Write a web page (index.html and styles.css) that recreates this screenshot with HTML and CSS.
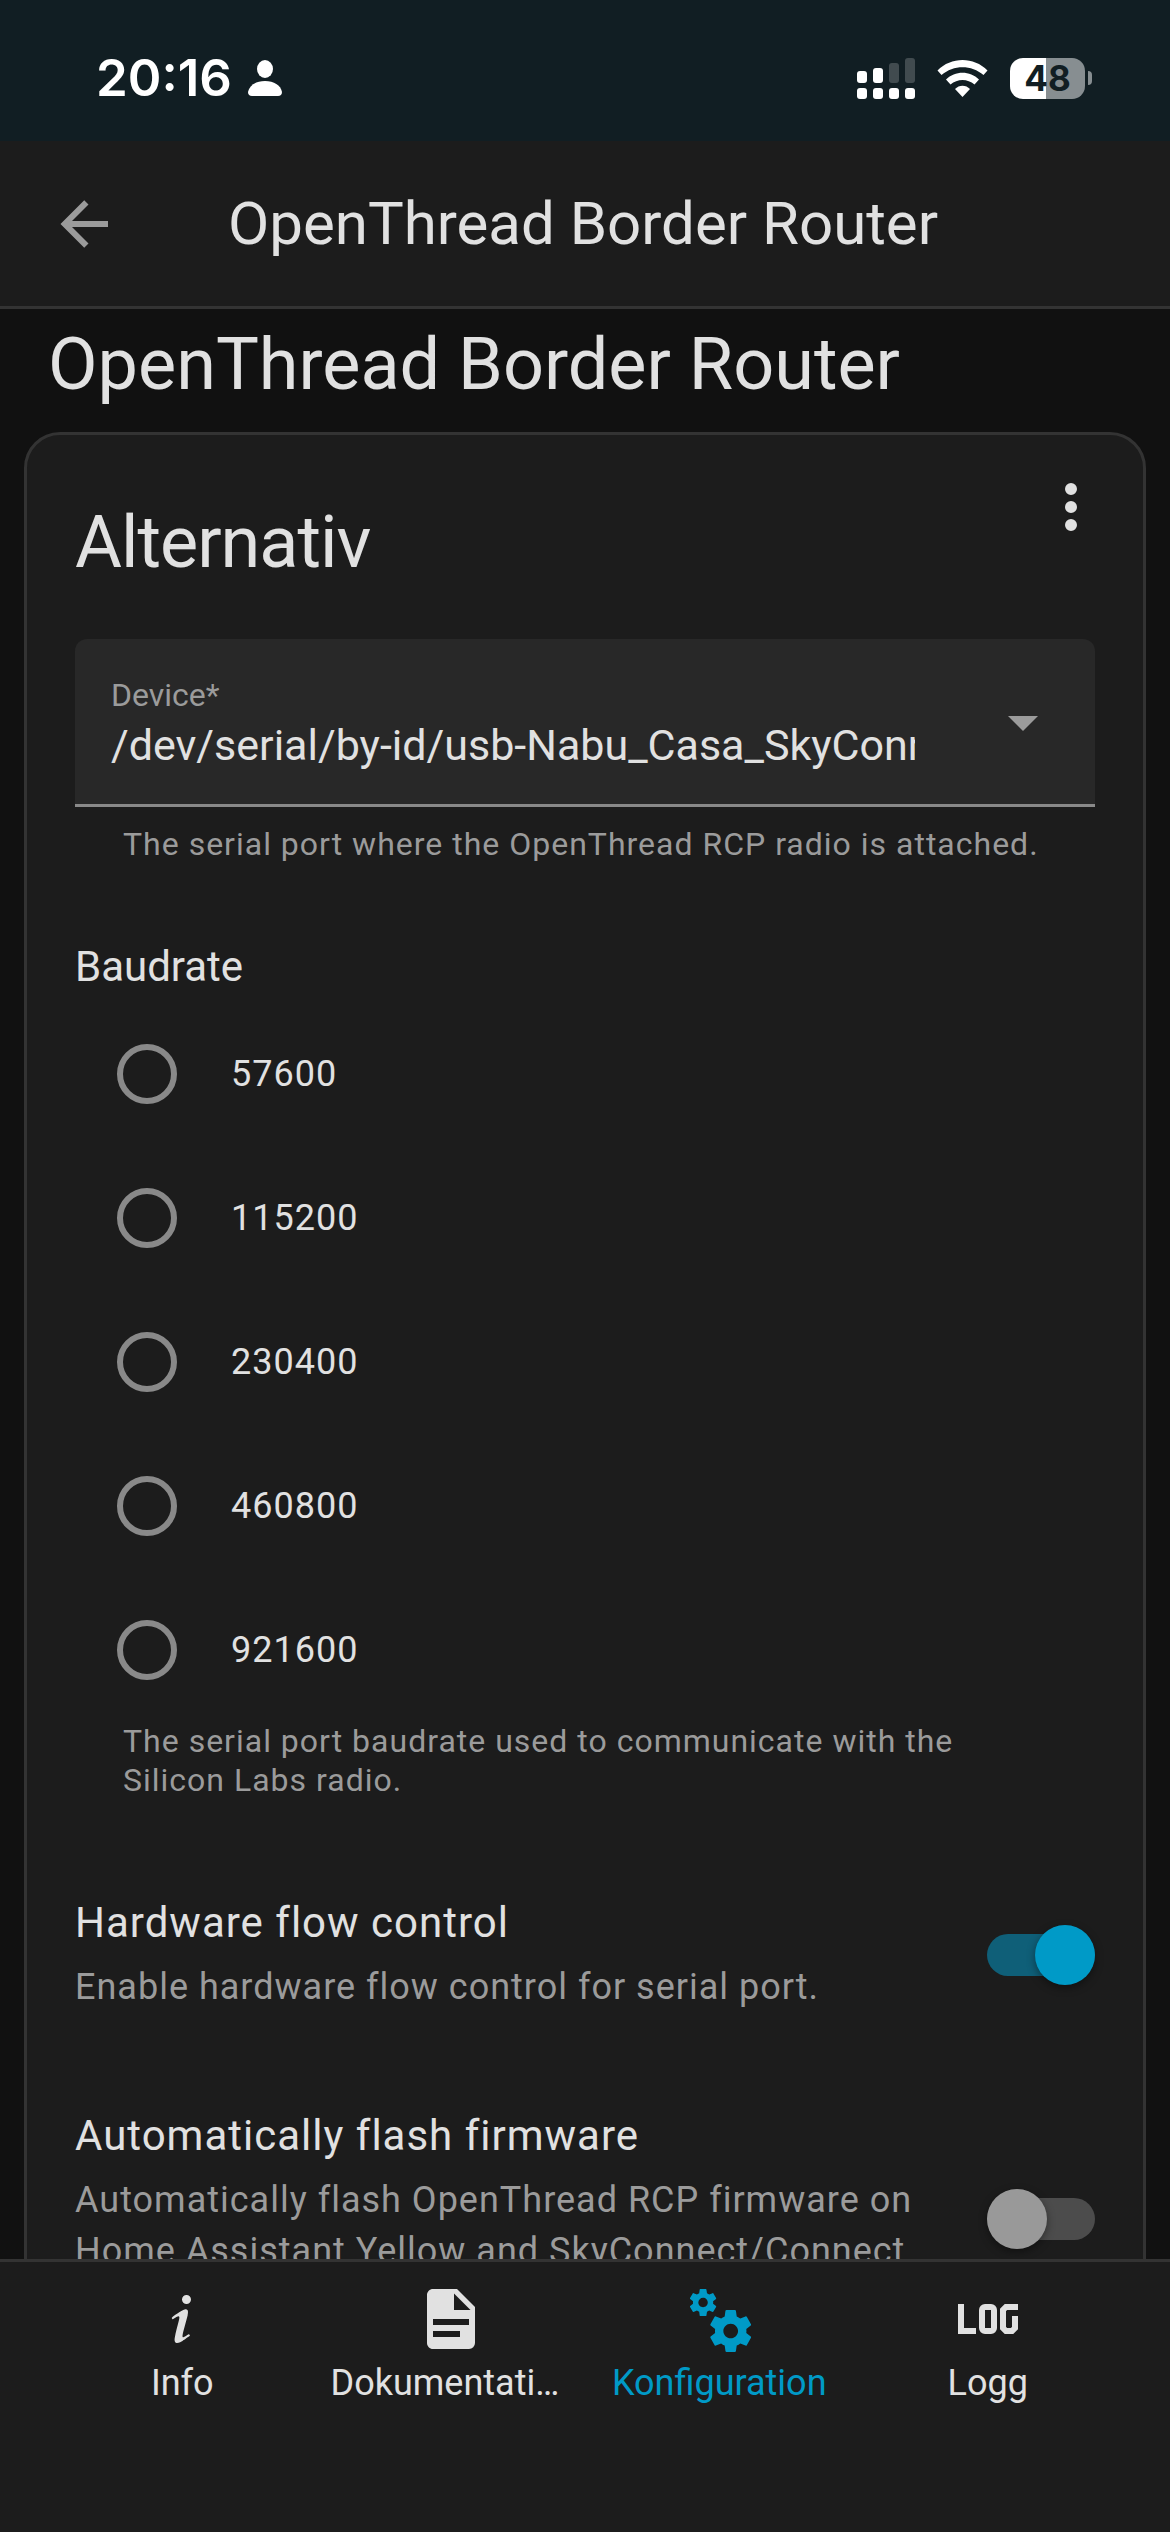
FILE: index.html
```html
<!DOCTYPE html>
<html lang="sv">
<head>
<meta charset="utf-8">
<meta name="viewport" content="width=device-width, initial-scale=1">
<title>OpenThread Border Router</title>
<link rel="stylesheet" href="styles.css">
</head>
<body>
<div class="status-bar">
  <div class="status-group">
    <span class="clock">20:16</span>
    <svg class="person" viewBox="0 0 34 36" aria-hidden="true"><ellipse cx="17" cy="9" rx="8" ry="9"/><path d="M4 36C1.500 36 0 34.500 0 32C1.500 25 8 21 17 21S32.500 25 34 32C34 34.500 32.500 36 30 36Z"/></svg>
  </div>
  <div class="status-group status-right">
    <svg class="signal" viewBox="0 0 58 41" aria-hidden="true">
      <rect x="0" y="13" width="10" height="12" rx="3"/><rect x="16" y="10" width="10" height="15" rx="3"/>
      <g opacity=".2"><rect x="32" y="5" width="10" height="20" rx="3"/><rect x="48" y="0" width="10" height="25" rx="3"/></g>
      <rect x="0" y="30" width="10" height="11" rx="3"/><rect x="16" y="30" width="10" height="11" rx="3"/><rect x="32" y="30" width="10" height="11" rx="3"/><rect x="48" y="30" width="10" height="11" rx="3"/>
    </svg>
    <svg class="wifi" viewBox="0 0 51 37" aria-hidden="true">
      <path d="M0.500 10.500C14 -3.500 37 -3.500 50.500 10.500L46.500 15C34.500 4.500 16.500 4.500 4.500 15Z"/>
      <path d="M9 19.500C18 10.500 33 10.500 42 19.500L37.500 24.500C30.500 18.500 20.500 18.500 13.500 24.500Z"/>
      <path d="M18 29C22 24.500 29 24.500 33 29L25.500 37Z"/>
    </svg>
    <span class="battery"><span class="battery-body">48</span><span class="battery-tip"></span></span>
  </div>
</div>

<header class="toolbar">
  <button class="back" type="button" aria-label="Tillbaka"><svg class="icon" viewBox="0 0 24 24"><path d="M20,11V13H8L13.500,18.500L12.080,19.920L4.160,12L12.080,4.080L13.500,5.500L8,11H20Z"/></svg></button>
  <div class="toolbar-title">OpenThread Border Router</div>
</header>

<main class="content">
  <h1 class="page-title">OpenThread Border Router</h1>
  <section class="card">
    <div class="card-header">
      <h2 class="card-title">Alternativ</h2>
      <button class="menu" type="button" aria-label="Meny"><svg class="icon" viewBox="0 0 24 24"><path d="M12,16A2,2 0 0,1 14,18A2,2 0 0,1 12,20A2,2 0 0,1 10,18A2,2 0 0,1 12,16M12,10A2,2 0 0,1 14,12A2,2 0 0,1 12,14A2,2 0 0,1 10,12A2,2 0 0,1 12,10M12,4A2,2 0 0,1 14,6A2,2 0 0,1 12,8A2,2 0 0,1 10,6A2,2 0 0,1 12,4Z"/></svg></button>
    </div>
    <form class="card-content">
      <div class="field">
        <div class="field-text">
          <label class="field-label" for="device">Device*</label>
          <select class="field-select" id="device">
            <option>/dev/serial/by-id/usb-Nabu_Casa_SkyConnect_v1.0</option>
          </select>
        </div>
        <svg class="icon field-arrow" viewBox="0 0 24 24" aria-hidden="true"><path d="M7,10L12,15L17,10H7Z"/></svg>
      </div>
      <p class="helper field-helper">The serial port where the OpenThread RCP radio is attached.</p>

      <fieldset class="radios">
        <legend class="legend">Baudrate</legend>
        <label class="radio-row"><input class="radio" type="radio" name="baudrate" value="57600">57600</label>
        <label class="radio-row"><input class="radio" type="radio" name="baudrate" value="115200">115200</label>
        <label class="radio-row"><input class="radio" type="radio" name="baudrate" value="230400">230400</label>
        <label class="radio-row"><input class="radio" type="radio" name="baudrate" value="460800">460800</label>
        <label class="radio-row"><input class="radio" type="radio" name="baudrate" value="921600">921600</label>
      </fieldset>
      <p class="helper">The serial port baudrate used to communicate with the Silicon Labs radio.</p>

      <div class="setting">
        <div class="setting-text">
          <label class="setting-name" for="flow">Hardware flow control</label>
          <p class="setting-desc">Enable hardware flow control for serial port.</p>
        </div>
        <input class="switch" id="flow" type="checkbox" role="switch" checked>
      </div>
      <div class="setting">
        <div class="setting-text">
          <label class="setting-name" for="flash">Automatically flash firmware</label>
          <p class="setting-desc">Automatically flash OpenThread RCP firmware on Home Assistant Yellow and SkyConnect/Connect ZBT-1.</p>
        </div>
        <input class="switch" id="flash" type="checkbox" role="switch">
      </div>
    </form>
  </section>
</main>

<nav class="tabs">
  <a class="tab" href="#info">
    <svg class="icon" viewBox="0 0 24 24" aria-hidden="true"><path d="M13.500,4A1.500,1.500 0 0,0 12,5.500A1.500,1.500 0 0,0 13.500,7A1.500,1.500 0 0,0 15,5.500A1.500,1.500 0 0,0 13.500,4M13.140,8.770C11.950,8.870 8.700,11.460 8.700,11.460C8.500,11.610 8.560,11.600 8.720,11.880C8.880,12.150 8.860,12.170 9.050,12.040C9.250,11.910 9.580,11.700 10.130,11.360C12.250,10 10.470,13.140 9.560,18.430C9.200,21.050 11.560,19.700 12.170,19.300C12.770,18.910 14.380,17.800 14.540,17.690C14.760,17.540 14.600,17.420 14.430,17.170C14.310,17 14.190,17.120 14.190,17.120C13.540,17.550 12.350,18.450 12.190,17.880C12,17.310 13.220,13.400 13.890,10.710C14,10.070 14.300,8.670 13.140,8.770Z"/></svg>
    <span class="tab-label">Info</span>
  </a>
  <a class="tab" href="#documentation">
    <svg class="icon" viewBox="0 0 24 24" aria-hidden="true"><path d="M13,9H18.500L13,3.500V9M6,2H14L20,8V20A2,2 0 0,1 18,22H6C4.890,22 4,21.100 4,20V4C4,2.890 4.890,2 6,2M15,18V16H6V18H15M18,14V12H6V14H18Z"/></svg>
    <span class="tab-label">Dokumentation</span>
  </a>
  <a class="tab tab-active" href="#config" aria-current="page">
    <svg class="icon" viewBox="0 0 24 24" aria-hidden="true"><path d="M15.900,18.450C17.250,18.450 18.350,17.350 18.350,16C18.350,14.650 17.250,13.550 15.900,13.550C14.540,13.550 13.450,14.650 13.450,16C13.450,17.350 14.540,18.450 15.900,18.450M21.100,16.680L22.580,17.840C22.710,17.950 22.750,18.130 22.660,18.290L21.260,20.710C21.170,20.860 21,20.920 20.830,20.860L19.090,20.160C18.730,20.440 18.330,20.670 17.910,20.850L17.640,22.700C17.620,22.870 17.470,23 17.300,23H14.500C14.320,23 14.180,22.870 14.150,22.700L13.890,20.850C13.460,20.670 13.070,20.440 12.710,20.160L10.960,20.860C10.810,20.920 10.620,20.860 10.540,20.710L9.140,18.290C9.050,18.130 9.090,17.950 9.220,17.840L10.700,16.680L10.650,16L10.700,15.310L9.220,14.160C9.090,14.050 9.050,13.860 9.140,13.710L10.540,11.290C10.620,11.130 10.810,11.070 10.960,11.130L12.710,11.840C13.070,11.560 13.460,11.320 13.890,11.150L14.150,9.290C14.180,9.130 14.320,9 14.500,9H17.300C17.470,9 17.620,9.130 17.640,9.290L17.910,11.150C18.330,11.320 18.730,11.560 19.090,11.840L20.830,11.130C21,11.070 21.170,11.130 21.260,11.290L22.660,13.710C22.750,13.860 22.710,14.050 22.580,14.160L21.100,15.310L21.150,16L21.100,16.680M6.690,8.070C7.560,8.070 8.260,7.370 8.260,6.500C8.260,5.630 7.560,4.920 6.690,4.920A1.580,1.580 0 0,0 5.110,6.500C5.110,7.370 5.820,8.070 6.690,8.070M10.030,6.940L11,7.680C11.070,7.750 11.090,7.870 11.030,7.970L10.130,9.530C10.080,9.630 9.960,9.670 9.860,9.630L8.740,9.180L8,9.620L7.810,10.810C7.790,10.920 7.700,11 7.590,11H5.790C5.670,11 5.580,10.920 5.560,10.810L5.400,9.620L4.640,9.180L3.520,9.630C3.410,9.670 3.300,9.630 3.240,9.530L2.340,7.970C2.280,7.870 2.310,7.750 2.390,7.680L3.340,6.940L3.310,6.500L3.340,6.060L2.390,5.320C2.310,5.250 2.280,5.130 2.340,5.030L3.240,3.470C3.300,3.370 3.410,3.330 3.520,3.380L4.640,3.820L5.400,3.380L5.560,2.190C5.580,2.080 5.670,2 5.790,2H7.590C7.700,2 7.790,2.080 7.810,2.190L8,3.380L8.740,3.820L9.860,3.380C9.960,3.330 10.080,3.370 10.130,3.470L11.030,5.030C11.090,5.130 11.070,5.250 11,5.320L10.030,6.060L10.060,6.500L10.030,6.940Z"/></svg>
    <span class="tab-label">Konfiguration</span>
  </a>
  <a class="tab" href="#logs">
    <svg class="icon icon-stroke" viewBox="0 0 24 24" aria-hidden="true"><polyline points="3,7 3,16 8,16"/><rect x="10" y="8" width="4" height="8" rx="1"/><polyline points="22,8 18,8 17,9 17,15 18,16 20,16 21,15 21,11"/></svg>
    <span class="tab-label">Logg</span>
  </a>
</nav>
</body>
</html>
```
FILE: styles.css
```css
* { box-sizing: border-box; }

body {
  margin: 0;
  height: 100vh;
  display: flex;
  flex-direction: column;
  background: #111;
  color: #e1e1e1;
  font-family: Roboto, "Noto Sans", sans-serif;
}

h1, h2, p { margin: 0; font-weight: 400; }

button {
  padding: 0;
  border: 0;
  background: none;
  color: inherit;
  display: flex;
  align-items: center;
  justify-content: center;
}

.icon { display: block; width: 72px; height: 72px; fill: currentColor; flex: none; }
.icon-stroke { fill: none; stroke: currentColor; stroke-width: 2; }

/* Status bar */
.status-bar {
  flex: none;
  display: flex;
  justify-content: space-between;
  align-items: center;
  height: 141px;
  padding: 15px 78px 0 96px;
  background: #111e23;
  color: #fff;
  font-family: Inter, sans-serif;
}
.status-group { display: flex; align-items: center; gap: 16px; }
.status-right { gap: 22px; }
.clock { font-size: 51px; line-height: 60px; font-weight: 600; }
.person { width: 34px; height: 36px; fill: #fff; }
.signal { width: 58px; height: 41px; fill: #fff; }
.wifi { width: 51px; height: 37px; fill: #fff; }
.battery { display: flex; align-items: center; gap: 3px; }
.battery-body {
  width: 75px;
  height: 41px;
  border-radius: 13px;
  background: linear-gradient(90deg, #fff 48%, #878e91 48%);
  color: #111e23;
  font-size: 35px;
  line-height: 41px;
  font-weight: 700;
  text-align: center;
}
.battery-tip { width: 4px; height: 14px; border-radius: 0 4px 4px 0; background: #878e91; }

/* Toolbar */
.toolbar {
  flex: none;
  display: flex;
  align-items: center;
  height: 168px;
  padding: 0 12px;
  background: #1c1c1c;
  border-bottom: 3px solid #333;
}
.back { width: 144px; height: 144px; color: #9b9b9b; }
.toolbar-title { margin-left: 72px; font-size: 60px; line-height: 72px; }

/* Content */
.content { flex: 1; min-height: 0; overflow-y: auto; scrollbar-width: none; }
.page-title { padding: 8px 48px 19px; font-size: 72px; line-height: 96px; }
.card {
  margin: 0 24px 24px;
  background: #1c1c1c;
  border: 3px solid #333;
  border-radius: 36px;
}
.card-header { display: flex; justify-content: space-between; align-items: flex-start; padding-left: 48px; }
.card-title { padding: 36px 0 24px; font-size: 72px; line-height: 144px; letter-spacing: -1px; }
.menu { width: 144px; height: 144px; }
.card-content { padding: 0 48px 48px; }

/* Device field */
.field {
  display: flex;
  align-items: center;
  gap: 72px;
  height: 168px;
  padding: 0 36px;
  background: #282828;
  border-bottom: 3px solid #898989;
  border-radius: 12px 12px 0 0;
}
.field-text { flex: 1; min-width: 0; padding-top: 6px; display: flex; flex-direction: column; }
.field-label { color: #9b9b9b; font-size: 32px; line-height: 40px; }
.field-select {
  appearance: none;
  width: 100%;
  height: 60px;
  padding: 0;
  border: 0;
  background: none;
  color: inherit;
  font: inherit;
  font-size: 43px;
  line-height: 60px;
}
.field-arrow { color: #9b9b9b; }

.helper { padding: 0 48px; color: #9b9b9b; font-size: 32px; line-height: 39px; letter-spacing: 1px; }
.field-helper { margin-top: 18px; }

/* Baudrate */
.radios { margin: 76px 0 0; padding: 0; border: 0; min-width: 0; }
.legend { padding: 0 0 8px; font-size: 42px; line-height: 54px; }
.radio-row {
  display: flex;
  align-items: center;
  gap: 54px;
  height: 144px;
  padding-left: 42px;
  font-size: 36px;
  letter-spacing: 1px;
}
.radio {
  appearance: none;
  width: 60px;
  height: 60px;
  margin: 0;
  border: 6px solid #898989;
  border-radius: 50%;
}
.radio:checked { border-color: #009ac7; background: radial-gradient(#009ac7 50%, transparent 52%); }

/* Switch rows */
.setting { display: flex; align-items: center; justify-content: space-between; gap: 48px; margin-top: 96px; }
.setting-text { flex: 1; min-width: 0; }
.setting-name { display: block; font-size: 42px; line-height: 54px; letter-spacing: 1px; }
.setting-desc { margin-top: 12px; color: #9b9b9b; font-size: 36px; line-height: 51px; letter-spacing: 1px; }
.switch {
  appearance: none;
  flex: none;
  display: flex;
  align-items: center;
  width: 108px;
  height: 42px;
  margin: 0;
  border-radius: 21px;
  background: #4c4c4c;
}
.switch::before {
  content: "";
  width: 60px;
  height: 60px;
  flex: none;
  border-radius: 50%;
  background: #999;
  box-shadow: 0 3px 9px rgba(0, 0, 0, .4);
}
.switch:checked { background: #0f5f78; justify-content: flex-end; }
.switch:checked::before { background: #009ac7; }

/* Bottom tabs */
.tabs {
  flex: none;
  display: flex;
  padding: 21px 48px 126px;
  background: #1c1c1c;
  border-top: 3px solid #333;
}
.tab {
  flex: 1;
  min-width: 0;
  display: flex;
  flex-direction: column;
  align-items: center;
  gap: 6px;
  padding: 0 14px;
  color: inherit;
  text-decoration: none;
}
.tab-active { color: #009ac7; }
.tab-label {
  max-width: 100%;
  overflow: hidden;
  text-overflow: ellipsis;
  white-space: nowrap;
  font-size: 36px;
  line-height: 45px;
}
```
